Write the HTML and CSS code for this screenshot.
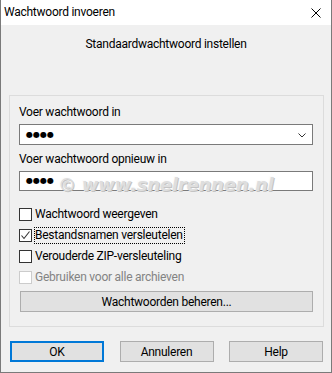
FILE: index.html
```html
<!DOCTYPE html>
<html lang="nl">
<head>
  <meta charset="UTF-8" />
  <title>Wachtwoord invoeren</title>
  <link rel="stylesheet" href="styles.css">
</head>
<body>
  <div class="window">
    <div class="titlebar">
      <span class="title">Wachtwoord invoeren</span>
      <svg class="close" width="10" height="10" viewBox="0 0 10 10">
        <path d="M0.5 0.5 L9.5 9.5 M9.5 0.5 L0.5 9.5" stroke="#000" stroke-width="1" fill="none" />
      </svg>
    </div>

    <div class="content">
      <p class="heading">Standaardwachtwoord instellen</p>

      <div class="group">
        <div class="field-label">Voer wachtwoord in</div>
        <div class="combo">
          <span class="dots">●●●●</span>
          <svg class="chevron" width="8" height="5" viewBox="0 0 8 5">
            <path d="M0.5 0.5 L4 4 L7.5 0.5" stroke="#333" stroke-width="1" fill="none" />
          </svg>
        </div>

        <div class="field-label second">Voer wachtwoord opnieuw in</div>
        <div class="textbox">
          <span class="dots">●●●●</span>
        </div>

        <div class="checks">
          <div class="check-row">
            <span class="box"></span>
            <span class="check-text">Wachtwoord weergeven</span>
          </div>
          <div class="check-row">
            <span class="box">
              <svg width="11" height="11" viewBox="0 0 11 11">
                <path d="M1.5 5.5 L4 8.5 L9.5 1.5" stroke="#333" stroke-width="1.1" fill="none" />
              </svg>
            </span>
            <span class="check-text focused">Bestandsnamen versleutelen</span>
          </div>
          <div class="check-row">
            <span class="box"></span>
            <span class="check-text">Verouderde ZIP-versleuteling</span>
          </div>
          <div class="check-row disabled">
            <span class="box"></span>
            <span class="check-text">Gebruiken voor alle archieven</span>
          </div>
        </div>

        <button class="btn btn-wide">Wachtwoorden beheren...</button>
      </div>

      <div class="buttons">
        <button class="btn btn-default">OK</button>
        <button class="btn">Annuleren</button>
        <button class="btn">Help</button>
      </div>
    </div>

    <div class="watermark">© www.snelrennen.nl</div>
  </div>
</body>
</html>
```

FILE: styles.css
```css
* {
  box-sizing: border-box;
  margin: 0;
  padding: 0;
}

body {
  font-family: "Segoe UI", Roboto, "Noto Sans", sans-serif;
  font-size: 12px;
  line-height: 15px;
  letter-spacing: -0.25px;
  color: #000;
  background: #fff;
}

.window {
  position: relative;
  width: 332px;
  height: 373px;
  background: #f0f0f0;
  border: 1px solid #7a7a7a;
  border-top: none;
}

.titlebar {
  height: 25px;
  background: #fff;
  display: flex;
  align-items: center;
  justify-content: space-between;
  padding: 0 10px 0 3px;
}

.title {
  font-size: 12px;
}

.content {
  padding-top: 12px;
}

.heading {
  text-align: center;
}

.group {
  margin: 43px 0 0 8px;
  width: 315px;
  border: 1px solid #dcdcdc;
  padding: 9px 10px 14px 9px;
}

.field-label {
  margin-bottom: 4px;
}

.field-label.second {
  margin-top: 7px;
}

.combo,
.textbox {
  height: 21px;
  background: #fff;
  border: 1px solid #7a7a7a;
  display: flex;
  align-items: center;
  justify-content: space-between;
  padding: 0 6px 0 6px;
}

.textbox {
  height: 20px;
}

.dots {
  font-family: "DejaVu Sans", sans-serif;
  font-size: 8px;
  line-height: 10px;
  letter-spacing: 0;
}

.chevron {
  margin-top: 1px;
}

.checks {
  margin-top: 13px;
}

.check-row {
  height: 21px;
  display: flex;
  align-items: center;
}

.box {
  width: 13px;
  height: 13px;
  background: #fff;
  border: 1px solid #333;
  margin-right: 3px;
  display: flex;
  align-items: center;
  justify-content: center;
}

.check-text.focused {
  outline: 1px dotted #000;
  outline-offset: 0;
  padding: 0 1px 0 0;
}

.check-row.disabled .box {
  border-color: #cccccc;
}

.check-row.disabled .check-text {
  color: #838383;
}

.btn {
  font-family: inherit;
  font-size: 12px;
  letter-spacing: inherit;
  color: #000;
  background: #e1e1e1;
  border: 1px solid #adadad;
  height: 21px;
  width: 94px;
}

.btn-wide {
  width: 293px;
  margin: 3px 0 0 1px;
  display: block;
}

.btn-default {
  border: 2px solid #0078d7;
}

.buttons {
  display: flex;
  justify-content: space-between;
  padding: 14px 8px 0 9px;
}

.watermark {
  position: absolute;
  left: 57px;
  top: 174px;
  font-family: "DejaVu Sans", sans-serif;
  font-weight: bold;
  font-style: italic;
  font-size: 18px;
  line-height: 22px;
  letter-spacing: -0.2px;
  color: #dedede;
  text-shadow: 1px 1px 0 #c4c4c4, -1px -1px 0 #fcfcfc;
  pointer-events: none;
}
```
